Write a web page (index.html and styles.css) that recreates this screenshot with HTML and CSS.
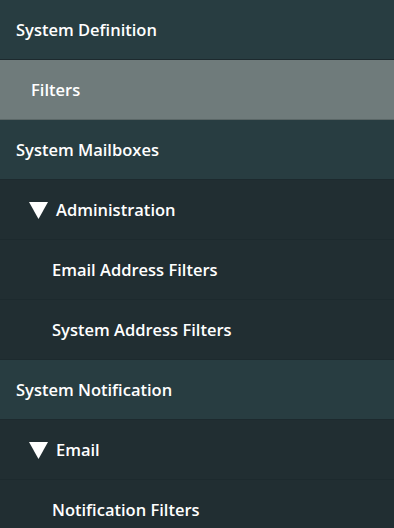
FILE: index.html
```html
<!DOCTYPE html>
<html lang="en">
  <head>
    <meta charset="UTF-8" />
    <meta name="viewport" content="width=device-width, initial-scale=1.0" />
    <title>Navigator</title>
    <link rel="stylesheet" href="styles.css">
  </head>
  <body>
    <ul class="nav">
      <li class="nav-item top">System Definition</li>
      <li class="nav-item module selected">Filters</li>
      <li class="nav-item top">System Mailboxes</li>
      <li class="nav-item section">
        <svg class="caret" width="19" height="17" viewBox="0 0 19 17"><polygon points="0,0 19,0 9.5,17" fill="#ffffff"/></svg>
        Administration
      </li>
      <li class="nav-item leaf">Email Address Filters</li>
      <li class="nav-item leaf">System Address Filters</li>
      <li class="nav-item top">System Notification</li>
      <li class="nav-item section">
        <svg class="caret" width="19" height="17" viewBox="0 0 19 17"><polygon points="0,0 19,0 9.5,17" fill="#ffffff"/></svg>
        Email
      </li>
      <li class="nav-item leaf">Notification Filters</li>
    </ul>
  </body>
</html>
```

FILE: styles.css
```css
body {
  margin: 0;
  background-color: #212e32;
  font-family: "Open Sans", "Liberation Sans", sans-serif;
  color: #ffffff;
}

.nav {
  list-style: none;
  margin: 0;
  padding: 0;
}

.nav-item {
  display: flex;
  align-items: center;
  height: 59px;
  border-bottom: 1px solid #1d2a2e;
  font-size: 16.5px;
  font-weight: 600;
  background-color: #212e32;
  padding-left: 52px;
}

.nav-item.top {
  background-color: #283d41;
  padding-left: 16px;
}

.nav-item.selected {
  background-color: #6f7b7b;
  border-bottom-color: #5b6767;
  padding-left: 31px;
}

.nav-item.section {
  padding-left: 29px;
}

.caret {
  margin-right: 8px;
  margin-top: 2px;
}
```
